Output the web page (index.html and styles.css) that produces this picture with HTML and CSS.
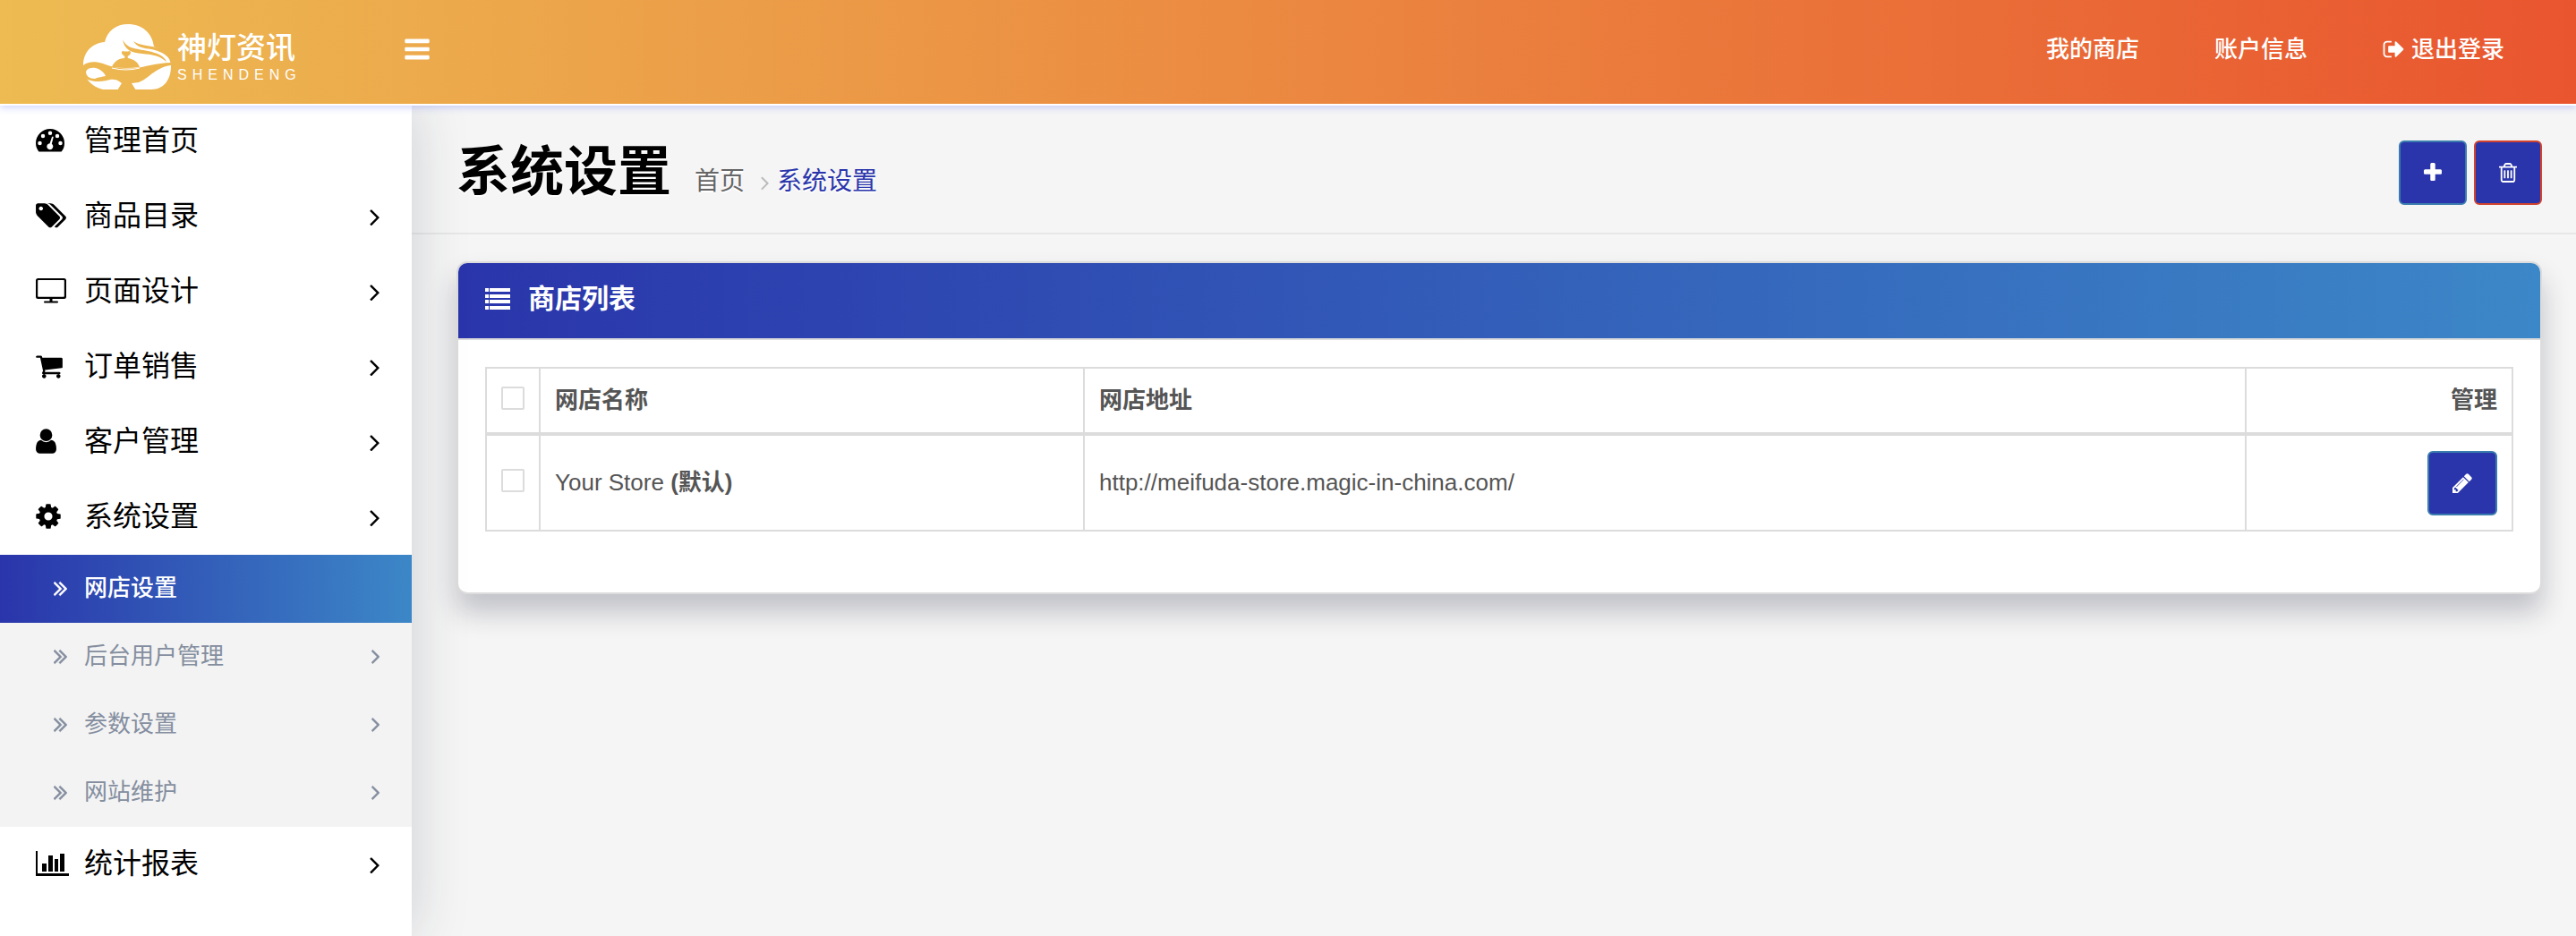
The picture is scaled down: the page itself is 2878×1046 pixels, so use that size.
FILE: index.html
```html
<!DOCTYPE html>
<html lang="zh-CN">
<head>
<meta charset="utf-8">
<title>系统设置</title>
<link rel="stylesheet" href="styles.css">
</head>
<body>
<svg class="sprite" aria-hidden="true">
  <symbol id="bars" viewBox="128 0 1536 1792"><path d="M1664 1344v128q0 26-19 45t-45 19H192q-26 0-45-19t-19-45v-128q0-26 19-45t45-19h1408q26 0 45 19t19 45zm0-512v128q0 26-19 45t-45 19H192q-26 0-45-19t-19-45V832q0-26 19-45t45-19h1408q26 0 45 19t19 45zm0-512v128q0 26-19 45t-45 19H192q-26 0-45-19t-19-45V320q0-26 19-45t45-19h1408q26 0 45 19t19 45z"/></symbol>
  <symbol id="angle" viewBox="579 0 592 1792"><path d="M1171 960q0 13-10 23l-466 466q-10 10-23 10t-23-10l-50-50q-10-10-10-23t10-23l393-393-393-393q-10-10-10-23t10-23l50-50q10-10 23-10t23 10l466 466q10 10 10 23z"/></symbol>
  <symbol id="double-angle" viewBox="397 0 966 1792"><path d="M979 960q0 13-10 23l-466 466q-10 10-23 10t-23-10l-50-50q-10-10-10-23t10-23l393-393-393-393q-10-10-10-23t10-23l50-50q10-10 23-10t23 10l466 466q10 10 10 23zm384 0q0 13-10 23l-466 466q-10 10-23 10t-23-10l-50-50q-10-10-10-23t10-23l393-393-393-393q-10-10-10-23t10-23l50-50q10-10 23-10t23 10l466 466q10 10 10 23z"/></symbol>
</svg>

<header class="topbar">
  <a class="logo" href="#">
    <svg class="logo-mark" viewBox="0 0 98 73" aria-hidden="true">
      <mask id="lamp">
        <rect width="98" height="73" fill="#fff"/>
        <path fill="#000" d="M-1 47C4 42 12 41 22 44C35 49 45 50 55 49.500C70 48 82 43 99 43V46C80 48 74 61 62 65L54 66L59 74H38L43 66C36 60 30 62 26 63C18 65 10 64 5 62C2 60-1 55-1 50Z"/>
        <path fill="#fff" d="M3 53C5 48 12 48 17 50C21 52 24 55 25 58C21 59 17 59 13 61C7 61 3 58 3 53Z"/>
        <path fill="#000" d="M32 48C34 42 40 38 46 38L46.500 36C43 34 42 31 44 30Q48 31 52 30C54 32 53 34 49.500 36L50 38C56 39 61 42 63 48Q48 50 32 48Z"/>
        <path fill="none" stroke="#fff" stroke-width="1.200" d="M32 49Q48 53 63 49"/>
        <path fill="#000" d="M44 17C49 28 59 27 72 30C83 32 91 36 93 42C85 35 77 34 66 33C54 32 46 29 44 17ZM56 19C64 24 72 24 80 25.500C89 28 95 33 98 41C93 33 85 30 76 28C68 27 60 26 56 19Z"/>
      </mask>
      <path mask="url(#lamp)" fill="#fff" d="M0 46C0 31 10 21 24 20C27 7 37 0 50 0C66 0 77 10 79 25C90 29 98 37 98 47C98 62 90 73 76 73H22C9 70 0 60 0 46Z"/>
    </svg>
    <span class="logo-text"><span class="logo-cn">神灯资讯</span><span class="logo-en">SHENDENG</span></span>
  </a>
  <button class="menu-toggle" type="button" aria-label="菜单"><svg class="icon" width="28" height="32"><use href="#bars"/></svg></button>
  <nav class="topnav">
    <a href="#">我的商店</a>
    <a href="#">账户信息</a>
    <a href="#"><svg class="icon" viewBox="64 0 1568 1792" width="24" height="26"><path d="M704 1440q0 4 1 20t.5 26.5-3 23.5-10 19.5-20.5 6.5h-320q-119 0-203.5-84.5t-84.5-203.5v-704q0-119 84.5-203.5t203.5-84.5h320q13 0 22.5 9.5t9.5 22.5q0 4 1 20t.5 26.5-3 23.5-10 19.5-20.5 6.5h-320q-66 0-113 47t-47 113v704q0 66 47 113t113 47h312l11.5 1 11.5 3 8 5.5 7 9 2 13.5zm928-544q0 26-19 45l-544 544q-19 19-45 19t-45-19-19-45v-288h-448q-26 0-45-19t-19-45v-384q0-26 19-45t45-19h448v-288q0-26 19-45t45-19 45 19l544 544q19 19 19 45z"/></svg>退出登录</a>
  </nav>
</header>

<div class="layout">
  <nav class="sidebar">
    <ul class="menu">
      <li><a class="item" href="#"><span class="item-icon"><svg class="icon" viewBox="0 0 32 26" width="32" height="26"><path fill-rule="evenodd" d="M3 25C1 22 0 19.500 0 16a16 16 0 0 1 32 0c0 3.500-1 6.500-3 9q-.5.6-1.200.6H4.200Q3.400 25.600 3 25ZM4.500 13.800a2.200 2.200 0 1 0 0 4.500a2.200 2.200 0 0 0 0-4.500ZM8 5.800a2.200 2.200 0 1 0 0 4.500a2.200 2.200 0 0 0 0-4.500ZM16 2.500a2.200 2.200 0 1 0 0 4.500a2.200 2.200 0 0 0 0-4.500ZM24 5.800a2.200 2.200 0 1 0 0 4.500a2.200 2.200 0 0 0 0-4.500ZM27.500 13.800a2.200 2.200 0 1 0 0 4.500a2.200 2.200 0 0 0 0-4.500ZM18 9L15.600 16.200a3.500 3.500 0 1 0 2.200.6L19.700 9.500Q19.400 8 18 9Z"/></svg></span>管理首页</a></li>
      <li><a class="item" href="#"><span class="item-icon"><svg class="icon" viewBox="0 0 1899 1792" width="34" height="32"><path d="M448 448q0-53-37.500-90.500T320 320t-90.500 37.500T192 448t37.500 90.500T320 576t90.500-37.500T448 448zm1067 576q0 53-37 90l-491 492q-39 37-91 37-53 0-90-37L91 890q-38-37-64.500-101T0 672V256q0-52 38-90t90-38h416q53 0 117 26.500T763 219l715 714q37 39 37 91zm384 0q0 53-37 90l-491 492q-39 37-91 37-36 0-59-14t-53-45l470-470q37-37 37-90 0-52-37-91L923 219q-38-38-102-64.500T704 128h224q53 0 117 26.500t102 64.500l715 714q37 39 37 91z"/></svg></span>商品目录<svg class="icon arrow" width="11" height="32"><use href="#angle"/></svg></a></li>
      <li><a class="item" href="#"><span class="item-icon"><svg class="icon" viewBox="0 0 34 28" width="34" height="28"><path fill-rule="evenodd" d="M2.500 0h29A2.500 2.500 0 0 1 34 2.500v18A2.500 2.500 0 0 1 31.500 23H18.500v2.500H24q1 0 1 1t-1 1H10q-1 0-1-1t1-1h5.500V23h-13A2.500 2.500 0 0 1 0 20.500v-18A2.500 2.500 0 0 1 2.500 0ZM3 2q-.8 0-.8.800V20q0 .8.8.8H31q.8 0 .8-.8V2.800Q31.800 2 31 2Z"/></svg></span>页面设计<svg class="icon arrow" width="11" height="32"><use href="#angle"/></svg></a></li>
      <li><a class="item" href="#"><span class="item-icon"><svg class="icon" viewBox="64 0 1664 1792" width="30" height="32"><path d="M704 1536q0 52-38 90t-90 38-90-38-38-90 38-90 90-38 90 38 38 90zm896 0q0 52-38 90t-90 38-90-38-38-90 38-90 90-38 90 38 38 90zm128-1088v512q0 24-16.500 42.500t-40.500 21.500l-1044 122q13 60 13 70 0 16-24 64h920q26 0 45 19t19 45-19 45-45 19h-1024q-26 0-45-19t-19-45q0-11 8-31.500t16-36 21.500-40 15.500-29.500l-177-823h-204q-26 0-45-19t-19-45 19-45 45-19h256q16 0 28.500 6.500t19.500 15.500 13 24.500 8 26 5.500 29.500 4.500 26h1201q26 0 45 19t19 45z"/></svg></span>订单销售<svg class="icon arrow" width="11" height="32"><use href="#angle"/></svg></a></li>
      <li><a class="item" href="#"><span class="item-icon"><svg class="icon" viewBox="256 0 1280 1792" width="23" height="32"><path d="M1536 1399q0 109-62.500 187t-150.500 78h-854q-88 0-150.500-78t-62.500-187q0-85 8.500-160.500t31.500-152 58.500-131 94-89 134.500-34.500q131 128 313 128t313-128q76 0 134.500 34.500t94 89 58.500 131 31.500 152 8.500 160.500zm-256-887q0 159-112.500 271.500t-271.500 112.500-271.500-112.500-112.500-271.500 112.500-271.500 271.500-112.500 271.500 112.500 112.500 271.500z"/></svg></span>客户管理<svg class="icon arrow" width="11" height="32"><use href="#angle"/></svg></a></li>
      <li>
        <a class="item" href="#"><span class="item-icon"><svg class="icon" viewBox="128 0 1536 1792" width="28" height="32"><path d="M1152 896q0-106-75-181t-181-75-181 75-75 181 75 181 181 75 181-75 75-181zm512-109v222q0 12-8 23t-20 13l-185 28q-19 54-39 91 35 50 107 138 10 12 10 25t-9 23q-27 37-99 108t-94 71q-12 0-26-9l-138-108q-44 23-91 38-16 136-29 186-7 28-36 28h-222q-14 0-24.500-8.500t-11.500-21.500l-28-184q-49-16-90-37l-141 107q-10 9-25 9-14 0-25-11-126-114-165-168-7-10-7-23 0-12 8-23 15-21 51-66.500t54-70.500q-27-50-41-99l-183-27q-13-2-21-12.500t-8-23.500v-222q0-12 8-23t19-13l186-28q14-46 39-92-40-57-107-138-10-12-10-24 0-10 9-23 26-36 98.500-107.500t94.500-71.500q13 0 26 10l138 107q44-23 91-38 16-136 29-186 7-28 36-28h222q14 0 24.500 8.500t11.500 21.500l28 184q49 16 90 37l142-107q9-9 24-9 13 0 25 10 129 119 165 170 7 8 7 22 0 12-8 23-15 21-51 66.500t-54 70.500q26 50 41 98l183 28q13 2 21 12.500t8 23.500z"/></svg></span>系统设置<svg class="icon arrow" width="11" height="32"><use href="#angle"/></svg></a>
        <ul class="submenu">
          <li><a class="subitem active" href="#"><svg class="icon" width="15" height="28"><use href="#double-angle"/></svg>网店设置</a></li>
          <li><a class="subitem" href="#"><svg class="icon" width="15" height="28"><use href="#double-angle"/></svg>后台用户管理<svg class="icon arrow" width="9" height="28"><use href="#angle"/></svg></a></li>
          <li><a class="subitem" href="#"><svg class="icon" width="15" height="28"><use href="#double-angle"/></svg>参数设置<svg class="icon arrow" width="9" height="28"><use href="#angle"/></svg></a></li>
          <li><a class="subitem" href="#"><svg class="icon" width="15" height="28"><use href="#double-angle"/></svg>网站维护<svg class="icon arrow" width="9" height="28"><use href="#angle"/></svg></a></li>
        </ul>
      </li>
      <li><a class="item" href="#"><span class="item-icon"><svg class="icon" viewBox="0 0 37 28" width="37" height="28"><path d="M0 0h2v25h35v3H0ZM7 14h5v9H7ZM14 5h5v18h-5ZM21 9h4v14h-4ZM27 3h5v20h-5Z"/></svg></span>统计报表<svg class="icon arrow" width="11" height="32"><use href="#angle"/></svg></a></li>
    </ul>
  </nav>

  <main class="content">
    <div class="page-header">
      <h1>系统设置</h1>
      <ol class="breadcrumb">
        <li><a href="#">首页</a></li>
        <li><svg class="icon sep" width="9" height="26" aria-hidden="true"><use href="#angle"/></svg><a class="current" href="#">系统设置</a></li>
      </ol>
      <div class="actions">
        <button class="btn" type="button" aria-label="新增"><svg class="icon" viewBox="192 0 1408 1792" width="20" height="26"><path d="M1600 736v192q0 40-28 68t-68 28h-416v416q0 40-28 68t-68 28h-192q-40 0-68-28t-28-68v-416h-416q-40 0-68-28t-28-68v-192q0-40 28-68t68-28h416v-416q0-40 28-68t68-28h192q40 0 68 28t28 68v416h416q40 0 68 28t28 68z"/></svg></button>
        <button class="btn danger" type="button" aria-label="删除"><svg class="icon" viewBox="192 0 1408 1792" width="20" height="26"><path d="M704 736v576q0 14-9 23t-23 9h-64q-14 0-23-9t-9-23v-576q0-14 9-23t23-9h64q14 0 23 9t9 23zm256 0v576q0 14-9 23t-23 9h-64q-14 0-23-9t-9-23v-576q0-14 9-23t23-9h64q14 0 23 9t9 23zm256 0v576q0 14-9 23t-23 9h-64q-14 0-23-9t-9-23v-576q0-14 9-23t23-9h64q14 0 23 9t9 23zm128 724v-948h-896v948q0 22 7 40.500t14.500 27 10.500 8.500h832q3 0 10.500-8.500t14.500-27 7-40.500zm-672-1076h448l-48-117q-7-9-17-11h-317q-10 2-17 11zm928 32v64q0 14-9 23t-23 9h-96v948q0 83-47 143.500t-113 60.500h-832q-66 0-113-58.500t-47-141.500v-952h-96q-14 0-23-9t-9-23v-64q0-14 9-23t23-9h309l70-167q15-37 54-63t79-26h320q40 0 79 26t54 63l70 167h309q14 0 23 9t9 23z"/></svg></button>
      </div>
    </div>

    <section class="panel">
      <h2 class="panel-heading"><svg class="icon" viewBox="0 0 28 24" width="28" height="24"><path d="M0 0h4v4H0ZM5 0h23v4H5ZM0 7h4v4H0ZM5 7h23v4H5ZM0 13h4v4H0ZM5 13h23v4H5ZM0 20h4v4H0ZM5 20h23v4H5Z"/></svg>商店列表</h2>
      <div class="panel-body">
        <table class="stores">
          <thead>
            <tr><th class="col-check"><input type="checkbox" aria-label="全选"></th><th class="col-name">网店名称</th><th>网店地址</th><th class="col-action">管理</th></tr>
          </thead>
          <tbody>
            <tr><td class="col-check"><input type="checkbox" aria-label="选择 Your Store"></td><td>Your Store <b>(默认)</b></td><td>http://meifuda-store.magic-in-china.com/</td><td class="col-action"><button class="btn" type="button" aria-label="编辑"><svg class="icon" viewBox="128 0 1536 1792" width="22" height="26"><path d="M491 1536l91-91-235-235-91 91v107h128v128h107zm523-928q0-22-22-22-10 0-17 7l-542 542q-7 7-7 17 0 22 22 22 10 0 17-7l542-542q7-7 7-17zm-54-192l416 416-832 832h-416v-416zm683 96q0 53-37 90l-166 166-416-416 166-165q36-38 90-38 53 0 91 38l235 234q37 39 37 91z"/></svg></button></td></tr>
          </tbody>
        </table>
      </div>
    </section>
  </main>
</div>
</body>
</html>
```
FILE: styles.css
```css
* { box-sizing: border-box; }

body {
  margin: 0;
  min-height: 100vh;
  display: flex;
  flex-direction: column;
  background: #f5f5f5;
  color: #555;
  font: 26px/36px "Liberation Sans", "Noto Sans CJK SC", sans-serif;
}

a { color: inherit; text-decoration: none; }
ul, ol { margin: 0; padding: 0; list-style: none; }
.sprite { position: absolute; width: 0; height: 0; }
.icon { display: block; flex: none; fill: currentColor; }

/* Top bar */
.topbar {
  position: relative;
  z-index: 2;
  display: flex;
  align-items: center;
  height: 116px;
  padding: 0 40px 0 93px;
  background: linear-gradient(90deg, #edbb52, #e9552f);
  box-shadow: 0 2px 0 #fff, 0 4px 8px rgba(60, 80, 255, .25);
  color: #fff;
}
.logo { display: flex; gap: 7px; width: 359px; padding-top: 11px; }
.logo-mark { width: 98px; height: 73px; }
.logo-text { display: flex; flex-direction: column; padding-top: 7px; font-weight: 500; }
.logo-cn { font-size: 33px; line-height: 40px; }
.logo-en { font-size: 16px; line-height: 20px; letter-spacing: 6px; }
.menu-toggle { padding: 0 0 6px; border: 0; background: none; color: #fff; }
.topnav { display: flex; margin-left: auto; padding-bottom: 6px; font-weight: 500; }
.topnav a { display: flex; align-items: center; gap: 8px; padding: 0 42px; }
.topnav a:last-child { padding-right: 40px; }

/* Sidebar */
.layout { display: flex; flex: 1; }
.sidebar {
  position: relative;
  z-index: 1;
  flex: none;
  width: 460px;
  background: #fff;
  box-shadow: 0 0 60px rgba(30, 40, 60, .18);
}
.item, .subitem { display: flex; align-items: center; }
.item { height: 84px; padding: 0 36px 2px 40px; color: #000; font-size: 32px; }
.item-icon { width: 54px; }
.arrow { margin-left: auto; }
.item .arrow { margin-top: 2px; }
.submenu { background: #f3f3f3; }
.subitem { gap: 19px; height: 76px; padding: 0 36px 2px 60px; color: #848e9f; }
.subitem.active { background: linear-gradient(90deg, #2a35ab, #3c87c7); color: #fff; font-weight: 500; }
.subitem .icon { stroke: currentColor; stroke-width: 30; }

/* Page header */
.content { flex: 1; min-width: 0; }
.page-header {
  display: flex;
  align-items: center;
  height: 146px;
  padding: 10px 38px 0 50px;
  border-bottom: 2px solid #e7e7e7;
  text-shadow: 0 2px #fff;
}
h1 { margin: 0; color: #000; font-size: 60px; line-height: 80px; font-weight: 700; }
.breadcrumb { display: flex; gap: 18px; padding: 20px 0 0 26px; font-size: 28px; color: #666; }
.breadcrumb li { display: flex; align-items: center; gap: 9px; }
.sep { margin-top: 2px; color: #bbb; }
.current { color: #2a35ab; }
.actions { display: flex; gap: 8px; margin-left: auto; }

.btn {
  display: inline-flex;
  align-items: center;
  justify-content: center;
  height: 72px;
  padding: 0 26px;
  border: 2px solid #3a7cad;
  border-radius: 6px;
  background: #2a35ab;
  color: #fff;
}
.btn.danger { border-color: #d0432f; }

/* Store list */
.panel {
  margin: 30px 38px 0 50px;
  border: 2px solid #dcdcdc;
  border-radius: 12px;
  background: #fff;
  box-shadow: 0 20px 30px rgba(30, 35, 60, .24);
}
.panel-heading {
  display: flex;
  align-items: center;
  gap: 20px;
  height: 86px;
  margin: 0;
  padding: 0 30px 4px;
  border-bottom: 2px solid #dcdcdc;
  border-radius: 10px 10px 0 0;
  background: linear-gradient(90deg, #2a35ab, #3c87c7);
  background-clip: padding-box;
  color: #fff;
  font-size: 30px;
  font-weight: 700;
}
.panel-body { padding: 30px 30px 68px; }
.stores { width: 100%; border-collapse: collapse; table-layout: fixed; }
.stores th, .stores td { padding: 16px; border: 2px solid #dcdcdc; text-align: left; }
.stores th { height: 74px; padding-bottom: 18px; border-bottom-width: 4px; }
.stores td { height: 108px; padding-bottom: 18px; }
.stores .col-check { width: 60px; padding-right: 14px; }
.col-name { width: 608px; }
.stores .col-action { width: 298px; text-align: right; }
.stores td.col-action { padding-bottom: 16px; }
.stores .btn { vertical-align: middle; }
input[type="checkbox"] {
  appearance: none;
  display: block;
  width: 26px;
  height: 26px;
  margin: 0 0 4px;
  border: 2px solid #dcdcdc;
  border-radius: 2px;
  background: #fff;
}
```
